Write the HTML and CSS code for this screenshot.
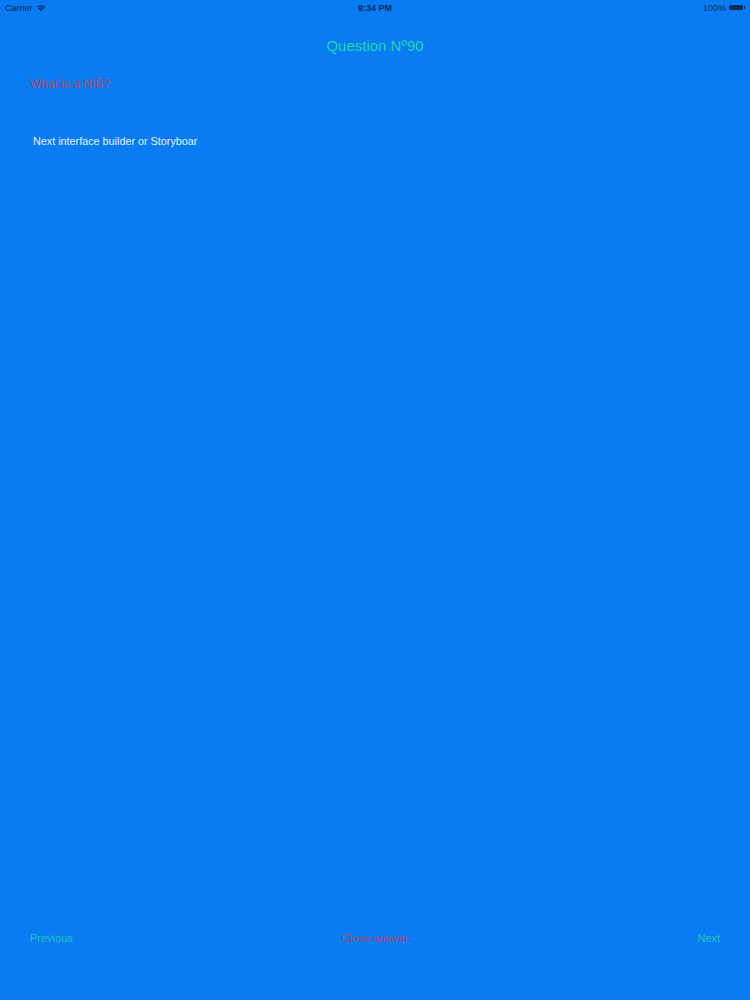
FILE: index.html
```html
<!DOCTYPE html>
<html>
<head>
<meta charset="utf-8">
<link rel="stylesheet" href="styles.css">
</head>
<body>
<div class="screen">
  <div class="status">
    <div class="status-left">Carrier
      <svg class="wifi" width="10" height="8" viewBox="0 0 10 8"><path d="M5 7.5 L3.4 5.8 A2.3 2.3 0 0 1 6.6 5.8 Z" fill="#0b2a55"/><path d="M2.2 4.6 A4 4 0 0 1 7.8 4.6 L7 5.4 A2.9 2.9 0 0 0 3 5.4 Z" fill="#0b2a55"/><path d="M0.6 3 A6.2 6.2 0 0 1 9.4 3 L8.6 3.8 A5 5 0 0 0 1.4 3.8 Z" fill="#0b2a55"/></svg>
    </div>
    <div class="status-center">9:34 PM</div>
    <div class="status-right">100%
      <span class="battery"></span><span class="battery-tip"></span>
    </div>
  </div>
  <div class="title">Question Nº90</div>
  <div class="question">What is a NIB?</div>
  <div class="answer">Next interface builder or Storyboar</div>
  <div class="spacer"></div>
  <div class="bottom">
    <span class="nav prev">Previous</span>
    <span class="close">Close answer</span>
    <span class="nav next">Next</span>
  </div>
</div>
</body>
</html>
```
FILE: styles.css
```css
html, body {
  margin: 0;
  padding: 0;
  background: #097bf3;
}
.screen {
  width: 750px;
  height: 1000px;
  display: flex;
  flex-direction: column;
  font-family: "Liberation Sans", Arial, sans-serif;
  background: #097bf3;
}
.status {
  height: 15px;
  display: grid;
  grid-template-columns: 1fr auto 1fr;
  align-items: center;
  padding: 0 5px;
  font-size: 9px;
  color: #0b2a55;
}
.status-left {
  display: flex;
  align-items: center;
  gap: 3px;
}
.status-center {
  font-weight: bold;
  font-size: 9px;
}
.status-right {
  display: flex;
  justify-content: flex-end;
  align-items: center;
}
.battery {
  margin-left: 3px;
  width: 14px;
  height: 5px;
  border-radius: 1.5px;
  background: #0b2a55;
  display: inline-block;
}
.battery-tip {
  width: 1.5px;
  height: 3px;
  background: #0b2a55;
  display: inline-block;
  margin-left: 0.5px;
}
.title {
  margin-top: 22px;
  text-align: center;
  font-size: 15px;
  color: #1ed8b0;
  height: 18px;
  line-height: 18px;
}
.question {
  margin-top: 22px;
  padding-left: 30px;
  font-size: 12px;
  color: #ae4a6a;
  height: 14px;
  line-height: 14px;
}
.answer {
  margin-top: 44px;
  padding-left: 33px;
  font-size: 10.8px;
  color: #e8f1ff;
  height: 12px;
  line-height: 12px;
}
.spacer {
  flex: 1;
}
.bottom {
  display: grid;
  grid-template-columns: 1fr auto 1fr;
  align-items: center;
  padding: 0 30px;
  height: 14px;
  margin-bottom: 55px;
  font-size: 11px;
  font-family: "Liberation Sans Narrow", "Liberation Sans", Arial, sans-serif;
}
.nav {
  color: #1dc8bb;
}
.next {
  justify-self: end;
}
.close {
  color: #ad4a6e;
}
```
